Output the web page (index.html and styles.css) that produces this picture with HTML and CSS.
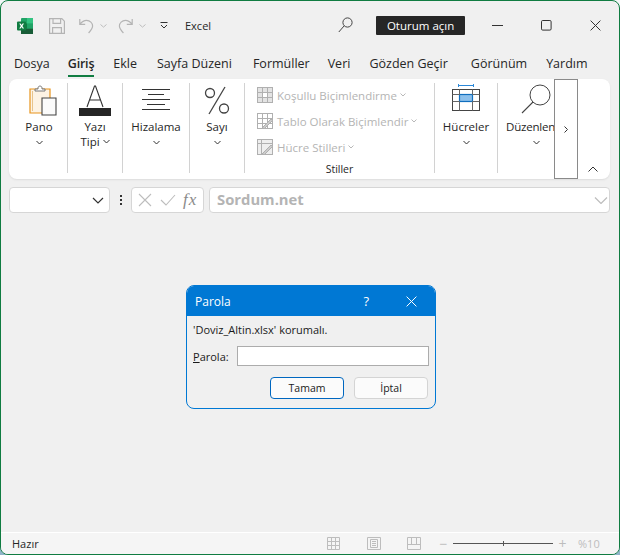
FILE: index.html
```html
<!DOCTYPE html>
<html lang="tr">
<head>
    <meta charset="UTF-8">
    <meta name="viewport" content="width=device-width, initial-scale=1.0">
    <title>Excel</title>
    <link rel="stylesheet" href="styles.css">
</head>
<body>
    <div class="window">

        <!-- title bar -->
        <div class="titlebar">
            <svg class="xl-logo" width="18" height="18" viewBox="0 0 18 18">
                <rect x="5" y="1" width="12" height="16" rx="1" fill="#21a366"/>
                <rect x="11" y="1" width="6" height="5.4" fill="#33c481"/>
                <rect x="5" y="6.4" width="6" height="5.3" fill="#107c41"/>
                <rect x="11" y="11.7" width="6" height="5.3" fill="#185c37"/>
                <rect x="5" y="11.7" width="6" height="5.3" fill="#185c37"/>
                <rect x="1" y="4.5" width="9" height="9" rx="1" fill="#107c41"/>
                <path d="M3.2 6.4h1.4l1 1.7 1-1.7H8L6.4 9 8 11.6H6.6l-1-1.7-1 1.7H3.2L4.8 9z" fill="#fff"/>
            </svg>
            <svg class="qa-save" width="16" height="16" viewBox="0 0 16 16" fill="none" stroke="#b4b4b4" stroke-width="1.2">
                <path d="M.6.6h12.2l2.6 2.6v12.2H.6z"/><path d="M4 .8v4.6h7.6V.8M3.6 15.2V9.6h8.8v5.6"/>
            </svg>
            <svg class="qa-undo" width="15" height="16" viewBox="0 0 15 16" fill="none" stroke="#b4b4b4" stroke-width="1.2">
                <path d="M.8 1v5.4h5.4M1 6.2C3 3.6 5 2.4 7.6 2.4c3.4 0 6 2.6 6 5.6 0 2.6-2 4.8-4 7"/>
            </svg>
            <svg class="qa-chev" width="7" height="4" viewBox="0 0 7 4" fill="none" stroke="#bdbdbd"><path d="M.5.5l3 2.6 3-2.6"/></svg>
            <svg class="qa-redo" width="15" height="16" viewBox="0 0 15 16" fill="none" stroke="#b4b4b4" stroke-width="1.2">
                <path d="M14.2 1v5.4H8.8M14 6.2C12 3.6 10 2.4 7.4 2.4c-3.4 0-6 2.6-6 5.6 0 2.6 2 4.8 4 7"/>
            </svg>
            <svg class="qa-chev" width="7" height="4" viewBox="0 0 7 4" fill="none" stroke="#bdbdbd"><path d="M.5.5l3 2.6 3-2.6"/></svg>
            <svg class="qa-more" width="8" height="7" viewBox="0 0 8 7" fill="none" stroke="#333"><path d="M.5.5h7M1 3l3 3 3-3"/></svg>
            <span class="app-name">Excel</span>
            <svg class="title-search" width="15" height="16" viewBox="0 0 15 16" fill="none" stroke="#444">
                <circle cx="9.5" cy="5.5" r="4.6"/><path d="M6.2 8.8L.8 15"/>
            </svg>
            <div class="signin">Oturum açın</div>
            <svg class="win-min" width="11" height="1" viewBox="0 0 11 1"><rect width="11" height="1" fill="#333"/></svg>
            <svg class="win-max" width="11" height="11" viewBox="0 0 11 11" fill="none" stroke="#333"><rect x=".5" y=".5" width="9.6" height="9.6" rx="1.2"/></svg>
            <svg class="win-close" width="11" height="11" viewBox="0 0 11 11" fill="none" stroke="#333"><path d="M.6.6l9.8 9.8M10.4.6L.6 10.4"/></svg>
        </div>

        <!-- tabs -->
        <div class="tabs">
            <span class="tab">Dosya</span>
            <span class="tab active">Giriş</span>
            <span class="tab">Ekle</span>
            <span class="tab">Sayfa Düzeni</span>
            <span class="tab">Formüller</span>
            <span class="tab">Veri</span>
            <span class="tab">Gözden Geçir</span>
            <span class="tab">Görünüm</span>
            <span class="tab">Yardım</span>
        </div>

        <!-- ribbon -->
        <div class="ribbon">
            <div class="group g-pano">
                <svg class="big-icon" width="28" height="32" viewBox="0 0 28 32" fill="none">
                    <path d="M1 5h20v24H1z" fill="#fdf3e4" stroke="#e8941c" stroke-width="1.2"/>
                    <path d="M3.500 7v20" stroke="#e8c48c"/>
                    <path d="M6 7V5h3V4c0-2.600 4-2.600 4 0v1h3v2z" fill="#fff" stroke="#777"/>
                    <path d="M13 14h14v17H13z" fill="#fbfbfb" stroke="#444" stroke-width="1.100"/>
                </svg>
                <div class="label">Pano</div>
                <svg class="chev" width="7" height="5" viewBox="0 0 7 5" fill="none" stroke="#333"><path d="M.5 1l3 3 3-3"/></svg>
            </div>
            <div class="group g-font">
                <svg class="big-icon" width="32" height="32" viewBox="0 0 32 32" fill="none">
                    <path d="M8 23L15.500 2h1L24 23M10.500 16h11" stroke="#333" stroke-width="1.100"/>
                    <rect y="24" width="32" height="8" fill="#262626"/>
                </svg>
                <div class="label">Yazı</div>
                <div class="label">Tipi <svg width="7" height="5" viewBox="0 0 7 5" fill="none" stroke="#333"><path d="M.5 1l3 3 3-3"/></svg></div>
            </div>
            <div class="group g-align">
                <svg class="big-icon" width="28" height="32" viewBox="0 0 28 32" stroke="#333">
                    <path d="M0 5.500h28M6 10.500h16M0 15.500h28M5 20.500h18M0 25.500h28"/>
                </svg>
                <div class="label">Hizalama</div>
                <svg class="chev" width="7" height="5" viewBox="0 0 7 5" fill="none" stroke="#333"><path d="M.5 1l3 3 3-3"/></svg>
            </div>
            <div class="group g-num">
                <svg class="big-icon" width="26" height="32" viewBox="0 0 26 32" fill="none" stroke="#444" stroke-width="1.300">
                    <circle cx="6" cy="9" r="4.500"/><circle cx="20" cy="24.500" r="4.500"/><path d="M21 3L5 30"/>
                </svg>
                <div class="label">Sayı</div>
                <svg class="chev" width="7" height="5" viewBox="0 0 7 5" fill="none" stroke="#333"><path d="M.5 1l3 3 3-3"/></svg>
            </div>
            <div class="group g-styles">
                <div class="style-row">
                    <svg width="16" height="16" viewBox="0 0 16 16" fill="#e3e3e3" stroke="#b0b0b0"><rect x=".5" y=".5" width="15" height="15"/><rect x="5.500" y="5.500" width="5" height="5" fill="#fff"/><path d="M.5 5.500h15M.5 10.500h15M5.500.5v15M10.500.5v15"/></svg>
                    <span>Koşullu Biçimlendirme</span>
                    <svg class="mini-chev" width="6" height="4" viewBox="0 0 6 4" fill="none" stroke="#b8b8b8"><path d="M.5.5L3 3 5.500.5"/></svg>
                </div>
                <div class="style-row">
                    <svg width="16" height="16" viewBox="0 0 16 16" fill="#fff" stroke="#b0b0b0"><rect x=".5" y=".5" width="15" height="15"/><path d="M.5 5.500h15M.5 10.500h15M5.500.5v15M10.500.5v15"/><path d="M5 15L14 6l1.500 1.500-8 8z" fill="#ccc"/></svg>
                    <span>Tablo Olarak Biçimlendir</span>
                    <svg class="mini-chev" width="6" height="4" viewBox="0 0 6 4" fill="none" stroke="#b8b8b8"><path d="M.5.5L3 3 5.500.5"/></svg>
                </div>
                <div class="style-row">
                    <svg width="16" height="16" viewBox="0 0 16 16" fill="#eee" stroke="#b0b0b0"><rect x=".5" y=".5" width="15" height="15"/><path d="M.5 4.500h15M4.500.5v15" fill="none"/><path d="M5 15L14 6l1.500 1.500-8 8z" fill="#ccc"/></svg>
                    <span>Hücre Stilleri</span>
                    <svg class="mini-chev" width="6" height="4" viewBox="0 0 6 4" fill="none" stroke="#b8b8b8"><path d="M.5.5L3 3 5.500.5"/></svg>
                </div>
                <div class="group-name">Stiller</div>
            </div>
            <div class="group g-cells">
                <svg class="big-icon" width="28" height="32" viewBox="0 0 28 32" fill="none">
                    <path d="M6 1.500h16M6.500 0v3M21.500 0v3" stroke="#2b88d8"/>
                    <rect x=".5" y="5.500" width="27" height="21" fill="#fff" stroke="#444"/>
                    <rect x="7.500" y="10.500" width="13" height="7" fill="#8cc0ec" stroke="#106ebe" stroke-width="1.200"/>
                    <path d="M.5 10.500h7M20.500 10.500h7M.5 17.500h7M20.500 17.500h7M7.500 5.500v5M20.500 5.500v5M7.500 17.500v9M20.500 17.500v9" stroke="#666"/>
                </svg>
                <div class="label">Hücreler</div>
                <svg class="chev" width="7" height="5" viewBox="0 0 7 5" fill="none" stroke="#333"><path d="M.5 1l3 3 3-3"/></svg>
            </div>
            <div class="group g-edit">
                <svg class="big-icon" width="30" height="32" viewBox="0 0 30 32" fill="none" stroke="#444">
                    <circle cx="19" cy="11" r="10"/><path d="M12 18L1 29" stroke-width="1.100"/>
                </svg>
                <div class="label">Düzenlen</div>
                <svg class="chev" width="7" height="5" viewBox="0 0 7 5" fill="none" stroke="#333"><path d="M.5 1l3 3 3-3"/></svg>
            </div>
            <div class="overflow-btn">
                <svg width="4" height="7" viewBox="0 0 4 7" fill="none" stroke="#333"><path d="M.5.5l3 3-3 3"/></svg>
            </div>
            <div class="collapse">
                <svg width="10" height="6" viewBox="0 0 10 6" fill="none" stroke="#333"><path d="M.5 5.500L5 1l4.500 4.500"/></svg>
            </div>
        </div>

        <!-- formula bar -->
        <div class="formula-row">
            <div class="name-box">
                <svg width="12" height="7" viewBox="0 0 12 7" fill="none" stroke="#333" stroke-width="1.200"><path d="M1 1l5 5 5-5"/></svg>
            </div>
            <div class="dots"><i></i><i></i><i></i></div>
            <div class="fx-box">
                <svg width="14" height="14" viewBox="0 0 14 14" fill="none" stroke="#bdbdbd" stroke-width="1.100"><path d="M1 1l12 12M13 1L1 13"/></svg>
                <svg width="16" height="12" viewBox="0 0 16 12" fill="none" stroke="#bdbdbd" stroke-width="1.100"><path d="M1 6l5 5L15 1"/></svg>
                <span class="fx">fx</span>
            </div>
            <div class="formula-box">
                <span class="formula-text">Sordum.net</span>
                <svg width="14" height="7" viewBox="0 0 14 7" fill="none" stroke="#bdbdbd" stroke-width="1.200"><path d="M1 .5l6 6 6-6"/></svg>
            </div>
        </div>

        <div class="sheet"></div>

        <!-- status bar -->
        <div class="statusbar">
            <span class="status-text">Hazır</span>
            <svg class="view-a" width="13" height="13" viewBox="0 0 13 13" fill="none" stroke="#bdbdbd"><path d="M.5.5h12v12H.5zM.5 4.500h12M.5 8.500h12M4.500.5v12M8.500.5v12"/></svg>
            <svg class="view-b" width="14" height="13" viewBox="0 0 14 13" fill="none" stroke="#bdbdbd"><path d="M.5.5h13v12H.5zM3.500 2.500h7v8h-7zM5 4.500h4M5 6.500h4M5 8.500h4"/></svg>
            <svg class="view-c" width="14" height="13" viewBox="0 0 14 13" fill="none" stroke="#bdbdbd"><path d="M.5.5h13v12H.5zM.5 7.500h13M4.500.5v7M9.500.5v7"/></svg>
            <span class="zoom-sign">−</span>
            <div class="slider"><i></i></div>
            <span class="zoom-sign">+</span>
            <span class="zoom-val">%10</span>
        </div>

        <!-- password dialog -->
        <div class="dialog">
            <div class="dialog-head">
                <span class="dialog-title">Parola</span>
                <span class="dialog-help">?</span>
                <svg width="11" height="11" viewBox="0 0 11 11" fill="none" stroke="#fff"><path d="M.6.6l9.800 9.800M10.400.6L.6 10.400"/></svg>
            </div>
            <div class="dialog-body">
                <div class="dialog-msg">'Doviz_Altin.xlsx' korumalı.</div>
                <div class="dialog-field">
                    <label><u>P</u>arola:</label>
                    <div class="input"></div>
                </div>
                <div class="dialog-btns">
                    <div class="btn primary">Tamam</div>
                    <div class="btn">İptal</div>
                </div>
            </div>
        </div>

    </div>
</body>
</html>
```

FILE: styles.css
```css
html, body{
    margin: 0;
    height: 100%;
    background: linear-gradient(#f4f7f8, #8fb4c8);
}
.window{
    box-sizing: border-box;
    width: 620px;
    height: 555px;
    border: 1px solid #107c41;
    border-radius: 8px;
    background: #f0f0f0;
    position: relative;
    display: flex;
    flex-direction: column;
    overflow: hidden;
    font-family: "Open Sans", "Noto Sans", sans-serif;
    color: #262626;
}

/* title bar */
.titlebar{
    height: 49px;
    display: flex;
    align-items: center;
    flex-shrink: 0;
}
.xl-logo{ margin-left: 15px; }
.qa-save{ margin-left: 15px; }
.qa-undo{ margin-left: 14px; }
.qa-redo{ margin-left: 11px; }
.qa-chev{ margin-left: 6px; }
.qa-more{ margin-left: 14px; }
.app-name{
    margin-left: 17px;
    font-size: 11px;
}
.title-search{ margin-left: 127px; margin-top: -2px; }
.signin{
    margin-left: 23px;
    width: 89px;
    height: 19px;
    line-height: 19px;
    background: #262626;
    color: #fff;
    border-radius: 1px;
    font-size: 11.500px;
    text-align: center;
}
.win-min{ margin-left: 27px; }
.win-max{ margin-left: 38px; }
.win-close{ margin-left: 38px; }

/* tabs */
.tabs{
    height: 29px;
    display: flex;
    gap: 19px;
    padding-left: 13px;
    flex-shrink: 0;
}
.tab{
    font-size: 12.500px;
    line-height: 29px;
    height: 26px;
    margin-top: -1px;
}
.tab.active{
    font-weight: 600;
    letter-spacing: -0.2px;
    border-bottom: 2px solid #107c41;
    margin-left: -1px;
}
.tab:nth-child(4){ margin-left: 1px; }
.tab:nth-child(5){ margin-left: 2px; }
.tab:nth-child(6){ margin-left: -1px; }
.tab:nth-child(8){ margin-left: 4px; }

/* ribbon */
.ribbon{
    margin-left: 8px;
    width: 601px;
    height: 100px;
    background: #fff;
    border-radius: 8px;
    box-shadow: 0 1px 2px #dcdcdc;
    display: flex;
    position: relative;
    flex-shrink: 0;
}
.group{
    box-sizing: border-box;
    margin: 4px 0 6px;
    border-right: 1px solid #d2d2d2;
    display: flex;
    flex-direction: column;
    align-items: center;
}
.big-icon{
    height: 32px;
    margin-top: 1px;
    margin-bottom: 3px;
}
.label{
    font-size: 11.500px;
    line-height: 15px;
    white-space: nowrap;
}
.label svg{ vertical-align: 2px; }
.chev{ margin-top: 6px; }
.g-pano{ width: 59px; padding-left: 2px; }
.g-pano .big-icon{ margin-left: 7px; }
.g-font{ width: 55px; }
.g-align{ width: 67px; }
.g-num{ width: 55px; }
.g-styles{ width: 190px; align-items: flex-start; padding-left: 12px; position: relative; }
.g-cells{ width: 63px; }
.g-edit{ width: 76px; border-right: none; }
.g-edit .label{
    align-self: flex-start;
    margin-left: 8px;
    letter-spacing: -0.2px;
}
.style-row{
    height: 26px;
    display: flex;
    align-items: center;
    font-size: 11.500px;
    color: #b4b4b4;
    white-space: nowrap;
}
.style-row:first-child{ margin-top: -1px; }
.style-row span{ margin-left: 4px; }
.mini-chev{ margin-left: 3px; }
.group-name{
    position: absolute;
    left: 0;
    right: 0;
    bottom: -3px;
    text-align: center;
    font-size: 10.500px;
}
.overflow-btn{
    box-sizing: border-box;
    width: 24px;
    height: 100px;
    margin-left: -20px;
    border: 1px solid #8a8a8a;
    display: flex;
    align-items: center;
    justify-content: center;
    background: #fff;
    position: relative;
}
.collapse{
    position: absolute;
    right: 12px;
    bottom: 7px;
    line-height: 0;
}

/* formula bar */
.formula-row{
    margin: 8px 9px 0 8px;
    height: 26px;
    display: flex;
    align-items: stretch;
    flex-shrink: 0;
}
.name-box, .fx-box, .formula-box{
    box-sizing: border-box;
    background: #fff;
    border: 1px solid #d6d6d6;
    border-radius: 4px;
    display: flex;
    align-items: center;
}
.name-box{
    width: 101px;
    justify-content: flex-end;
    padding-right: 5px;
}
.dots{
    width: 21px;
    display: flex;
    flex-direction: column;
    align-items: center;
    justify-content: center;
    gap: 2px;
}
.dots i{
    width: 2px;
    height: 2px;
    background: #333;
}
.fx-box{
    width: 73px;
    padding-left: 6px;
    gap: 8px;
}
.fx{
    font-family: "Liberation Serif", serif;
    font-style: italic;
    font-size: 17px;
    letter-spacing: 1px;
    color: #8a8a8a;
    margin-left: -1px;
}
.formula-box{
    flex: 1;
    margin-left: 5px;
    padding: 0 1px 0 7px;
    justify-content: space-between;
    font-size: 14.800px;
    font-weight: 700;
    color: #b4b4b4;
}
.formula-text{ margin-top: -2px; }

.sheet{ flex: 1; }

/* status bar */
.statusbar{
    height: 22px;
    background: #f5f5f5;
    border-top: 1px solid #fff;
    box-sizing: border-box;
    display: flex;
    align-items: center;
    flex-shrink: 0;
    color: #bdbdbd;
}
.status-text{
    margin-left: 11px;
    font-size: 11px;
    color: #262626;
    width: 315px;
}
.view-b{ margin-left: 27px; }
.view-c{ margin-left: 26px; }
.zoom-sign{
    font-size: 14px;
    line-height: 14px;
    width: 9px;
    text-align: center;
}
.view-c + .zoom-sign{ margin-left: 18px; }
.slider{
    width: 100px;
    height: 1px;
    background: #555;
    margin: 0 5px;
    position: relative;
}
.slider i{
    position: absolute;
    left: 50px;
    top: -2px;
    width: 1px;
    height: 5px;
    background: #555;
}
.zoom-val{
    margin-left: 11px;
    font-size: 11px;
}

/* dialog */
.dialog{
    position: absolute;
    left: 185px;
    top: 284px;
    box-sizing: border-box;
    width: 250px;
    height: 124px;
    border: 1px solid #0078d4;
    border-radius: 8px;
    background: #f0f0f0;
    overflow: hidden;
    font-size: 11px;
    color: #1a1a1a;
}
.dialog-head{
    height: 30px;
    background: #0078d4;
    color: #fff;
    display: flex;
    align-items: center;
    padding: 0 18px 0 8px;
}
.dialog-title{
    font-size: 12px;
    flex: 1;
}
.dialog-help{
    font-size: 13px;
    margin-right: 37px;
}
.dialog-body{ padding: 7px 6px 0; }
.dialog-msg{ line-height: 14px; }
.dialog-field{
    margin-top: 9px;
    display: flex;
    align-items: center;
}
.dialog-field label{ width: 44px; }
.input{
    box-sizing: border-box;
    width: 192px;
    height: 20px;
    background: #fff;
    border: 1px solid #acacac;
}
.dialog-btns{
    margin-top: 11px;
    display: flex;
    justify-content: flex-end;
    gap: 10px;
    padding-right: 1px;
}
.btn{
    box-sizing: border-box;
    width: 74px;
    height: 22px;
    line-height: 20px;
    text-align: center;
    font-size: 10.500px;
    background: #fbfbfb;
    border: 1px solid #d4d4d4;
    border-radius: 4px;
}
.btn.primary{
    border-color: #0067c0;
}
```
